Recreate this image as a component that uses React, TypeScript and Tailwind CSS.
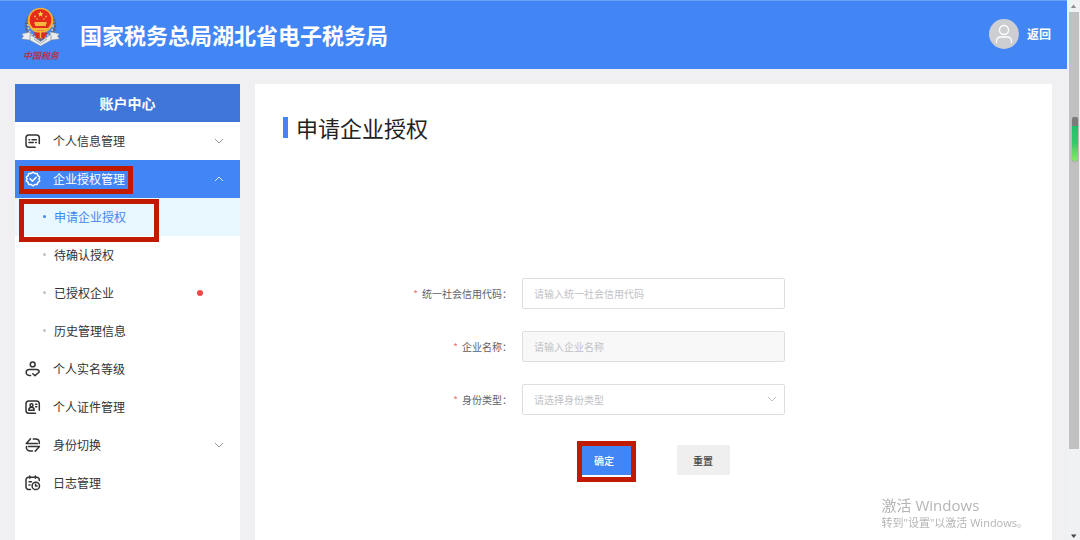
import React, { useState } from 'react';

interface SubItem {
  label: string;
  notice?: boolean;
}

interface MenuItem {
  label: string;
  icon: React.ReactNode;
  expandable?: boolean;
  children?: SubItem[];
}

const iconProps = {
  className: 'w-4 h-4 shrink-0',
  viewBox: '0 0 16 16',
  fill: 'none',
  stroke: 'currentColor',
  strokeWidth: 1.5,
  strokeLinecap: 'round' as const,
  strokeLinejoin: 'round' as const,
};

const InfoIcon = () => (
  <svg {...iconProps}>
    <path d="M10.2 14.3H3.8A2.8 2.8 0 0 1 1 11.5V4.8A2.8 2.8 0 0 1 3.8 2h7.7a2.8 2.8 0 0 1 2.8 2.8v5.7" />
    <path d="M4 6.7h.6M7 6.7h4.3M4 9.5h4.3M10.7 9.5h.6" />
  </svg>
);

const BadgeIcon = () => (
  <svg {...iconProps}>
    <path d="M8 1.2l1.9 1.3 2.3-.1.7 2.2 1.8 1.4L14 8l.7 2-1.8 1.4-.7 2.2-2.3-.1L8 14.8l-1.9-1.3-2.3.1-.7-2.2L1.3 10 2 8l-.7-2 1.8-1.4.7-2.2 2.3.1z" />
    <path d="M5 7.8l2.5 2.3L11.2 6.2" />
  </svg>
);

const RealNameIcon = () => (
  <svg {...iconProps}>
    <circle cx="7.7" cy="3.4" r="2.4" />
    <path d="M5.6 14.5H4.2c-1.8 0-3-1.4-3-3.1s1.2-3 3-3h7.2c1.6 0 2.8 1.100 2.8 2.600L10 14.600 7.800 12.700" />
  </svg>
);

const CardIcon = () => (
  <svg {...iconProps}>
    <path d="M10.5 14.3H3.8A2.8 2.8 0 0 1 1 11.5V4.8A2.8 2.8 0 0 1 3.800 2h7.700a2.800 2.800 0 0 1 2.800 2.800v6.400" />
    <circle cx="6.500" cy="6.200" r="1.500" />
    <path d="M3.800 11.200c0-1.900 1-2.900 2.700-2.900s2.700 1 2.700 2.900zM10.600 5.200h1.200M10.600 7.800h1.200" />
  </svg>
);

const SwitchIcon = () => (
  <svg {...iconProps}>
    <path d="M5.5 1.800L1.300 6.600h11M8.300 2h2.200c2.200 0 3.800 1.400 3.800 3.600v.8" />
    <path d="M10.200 14.200l4.200-4.800h-11M7.500 14H5.200C3 14 1.400 12.600 1.400 10.400v-.8" />
  </svg>
);

const LogIcon = () => (
  <svg {...iconProps}>
    <path d="M5.500 14.500H3.500A2.500 2.500 0 0 1 1 12V4.800a2.500 2.500 0 0 1 2.500-2.500h8.300a2.500 2.500 0 0 1 2.500 2.500v.7M4.800 1v2.300M10.400 1v2.300M4 6.700h2.500M4 10h1" />
    <circle cx="10.800" cy="10.900" r="3.700" />
    <path d="M10.600 9.200v1.900h1.500" />
  </svg>
);

const Chevron = ({ up = false }: { up?: boolean }) => (
  <svg className="w-[10px] h-[10px]" viewBox="0 0 10 10" fill="none" stroke="currentColor" strokeWidth="1">
    <path d={up ? 'M1 7l4-4 4 4' : 'M1 3l4 4 4-4'} />
  </svg>
);

const TaxLogo = () => (
  <svg className="w-10 h-10" viewBox="0 0 40 40">
    {/* gear wheel and wheat ears */}
    <circle cx="19.5" cy="18.5" r="14" fill="none" stroke="#5b6170" strokeWidth="3.5" strokeDasharray="2 1" />
    <circle cx="19.5" cy="18.5" r="12.5" fill="none" stroke="#d5d2c4" strokeWidth="1.5" strokeDasharray="2 1.5" />
    <circle cx="19.5" cy="13.5" r="12.8" fill="#f2b233" />
    <circle cx="19.5" cy="13" r="10.8" fill="#e32a1c" />
    <path d="M19.5 4l.9 2 2.1.2-1.6 1.400.5 2.100-1.800-1.100-1.800 1.100.5-2.100-1.600-1.400 2-.2z" fill="#f9cf4a" />
    <g fill="#f6b73c">
      <circle cx="14" cy="9.500" r=".9" />
      <circle cx="25" cy="9.500" r=".9" />
      <circle cx="16" cy="12" r=".8" />
      <circle cx="23" cy="12" r=".8" />
      <path d="M14 15h11l1.500 1.500H25V19H14v-2.500h-1.500z" />
      <path d="M11 21h17l-2.500 2.500h-12z" />
    </g>
    <path d="M12.500 25.500h14l-3 6h-8z" fill="#dc2c20" />
    <path d="M19.500 24v7" stroke="#f4be46" strokeWidth="1.500" />
    {/* ribbon */}
    <path d="M.5 27l8-2 1.500 3 9.500 6.500L29 28l1.500-3 8 2-2 2 2 3-8 1-11 6-11-6-8-1 2-3z" fill="#e9edf0" stroke="#7d8793" strokeWidth=".5" />
    <path d="M9 28v5M30 28v5M13 32l6.500 4.500L26 32" stroke="#8a949e" strokeWidth=".8" fill="none" />
  </svg>
);

const menu: MenuItem[] = [
  { label: '个人信息管理', icon: <InfoIcon />, expandable: true },
  {
    label: '企业授权管理',
    icon: <BadgeIcon />,
    expandable: true,
    children: [
      { label: '申请企业授权' },
      { label: '待确认授权' },
      { label: '已授权企业', notice: true },
      { label: '历史管理信息' },
    ],
  },
  { label: '个人实名等级', icon: <RealNameIcon /> },
  { label: '个人证件管理', icon: <CardIcon /> },
  { label: '身份切换', icon: <SwitchIcon />, expandable: true },
  { label: '日志管理', icon: <LogIcon /> },
];

const Header = () => (
  <header className="h-[69px] bg-[#4285f4] border-t border-[#6ba0f6] flex items-center justify-between pl-[21px] pr-4 pb-[2px] text-white">
    <div className="flex items-center gap-[19px]">
      <div className="flex flex-col items-center gap-1">
        <TaxLogo />
        <span className="text-[9px] leading-[10px] italic font-bold text-[#b3344e]">中国税务</span>
      </div>
      <h1 className="text-[22px] leading-8 font-bold">国家税务总局湖北省电子税务局</h1>
    </div>
    <div className="flex items-center gap-2">
      <span className="w-[30px] h-[30px] rounded-full bg-[#ccced2] flex items-center justify-center">
        <svg className="w-5 h-5" viewBox="0 0 20 20" fill="none" stroke="#fff" strokeWidth="1.3" strokeLinecap="round">
          <circle cx="10" cy="6" r="4.500" />
          <path d="M2.500 18.500V17a4 4 0 0 1 4-4h7a4 4 0 0 1 4 4v1.500" />
        </svg>
      </span>
      <a href="#" className="text-xs font-bold">返回</a>
    </div>
  </header>
);

const Sidebar = () => {
  const [open, setOpen] = useState('企业授权管理');
  const [current, setCurrent] = useState('申请企业授权');

  return (
    <nav className="w-[225px] shrink-0 bg-white text-xs text-[#333]">
      <h2 className="h-[38px] bg-[#4076d8] text-white text-sm font-bold flex items-center justify-center">账户中心</h2>
      <ul>
        {menu.map((item) => {
          const expanded = open === item.label;
          return (
            <li key={item.label}>
              <button
                type="button"
                onClick={() => setOpen(expanded ? '' : item.label)}
                className={`relative w-full h-[38px] pl-[10px] pr-4 pb-px flex items-center gap-3 ${
                  expanded ? 'bg-[#4285f4] text-white' : 'text-[#333]'
                }`}
              >
                {item.icon}
                <span className="flex-1 text-left">{item.label}</span>
                {item.expandable && (
                  <span className={expanded ? 'text-[#dbe8fd]' : 'text-[#999]'}>
                    <Chevron up={expanded} />
                  </span>
                )}
                {expanded && item.children && (
                  <span className="absolute left-1 top-[6px] w-[114px] h-[28px] border-5 border-[#c01a00]" />
                )}
              </button>
              {expanded && item.children && (
                <ul>
                  {item.children.map((sub) => {
                    const active = current === sub.label;
                    return (
                      <li key={sub.label}>
                        <a
                          href="#"
                          onClick={() => setCurrent(sub.label)}
                          className={`relative h-[38px] pl-7 pr-[37px] pb-px flex items-center gap-2 ${
                            active ? 'bg-[#e9f7fe] text-[#4285f4]' : ''
                          }`}
                        >
                          <span className={`w-[3px] h-[3px] rounded-full ${active ? 'bg-[#4285f4]' : 'bg-[#c4c4c4]'}`} />
                          <span className="flex-1">{sub.label}</span>
                          {sub.notice && <span className="w-[6px] h-[6px] rounded-full bg-[#f04848]" />}
                          {active && (
                            <span className="absolute left-1 top-px w-[140px] h-[43px] z-10 border-5 border-[#c01a00]" />
                          )}
                        </a>
                      </li>
                    );
                  })}
                </ul>
              )}
            </li>
          );
        })}
      </ul>
    </nav>
  );
};

const fieldClass =
  'w-full h-[31px] px-[11px] border border-[#dcdee2] rounded-xs text-[10px] placeholder:text-[#c0c2c6] outline-none';

const Label = ({ htmlFor, children }: { htmlFor: string; children: React.ReactNode }) => (
  <label htmlFor={htmlFor} className="text-right text-[10px] text-[#606266]">
    <span className="text-[#f56c6c] mr-1">*</span>
    {children}：
  </label>
);

const AuthForm = () => {
  const [code, setCode] = useState('');
  const [role, setRole] = useState('');

  const reset = () => {
    setCode('');
    setRole('');
  };

  return (
    <form onSubmit={(e) => e.preventDefault()} className="mt-[134px]">
      <div className="grid grid-cols-[1fr_263px_1fr] gap-x-[10px] gap-y-[22px] items-center">
        <Label htmlFor="code">统一社会信用代码</Label>
        <input
          id="code"
          type="text"
          value={code}
          onChange={(e) => setCode(e.target.value)}
          placeholder="请输入统一社会信用代码"
          className={`${fieldClass} bg-white`}
        />
        <span />

        <Label htmlFor="company">企业名称</Label>
        <input id="company" type="text" disabled placeholder="请输入企业名称" className={`${fieldClass} bg-[#f8f8f8]`} />
        <span />

        <Label htmlFor="role">身份类型</Label>
        <div className="relative">
          <select
            id="role"
            value={role}
            onChange={(e) => setRole(e.target.value)}
            className={`${fieldClass} appearance-none bg-white text-[#c0c2c6]`}
          >
            <option value="">请选择身份类型</option>
          </select>
          <span className="absolute right-2 top-[10px] text-[#c0c2c6] pointer-events-none">
            <Chevron />
          </span>
        </div>
        <span />
      </div>

      <div className="mt-[30px] flex justify-center gap-[46px] text-[10px] font-medium">
        <div className="relative">
          <button type="submit" className="w-[53px] h-[30px] bg-[#4285f4] text-white">确定</button>
          <span className="absolute -left-px -top-1 w-[59px] h-[41px] border-5 border-[#c01a00] pointer-events-none" />
        </div>
        <button type="button" onClick={reset} className="w-[53px] h-[30px] bg-[#efefef] text-[#444]">重置</button>
      </div>
    </form>
  );
};

const Scrollbar = () => (
  <div className="relative w-[13px] shrink-0 bg-[#f0f1f3] flex flex-col items-center">
    <svg className="w-[11px] h-3" viewBox="0 0 11 12">
      <path d="M3 8l2.500-3.500L8 8z" fill="#8a8a8a" />
    </svg>
    <div className="w-[10px] h-[437px] bg-[#c1c1c1]" />
    <svg className="w-[11px] h-3 mt-auto" viewBox="0 0 11 12">
      <path d="M3 6.500h5.500L5.700 10z" fill="#444" />
    </svg>
    <div className="absolute right-[2px] top-[117px] w-[6px] h-11 rounded-xs overflow-hidden bg-[#7b7b7b] shadow">
      <div className="mt-[9px] h-[35px] bg-linear-to-b from-[#22c06c] via-[#2fcb68] to-[#8be56c]" />
    </div>
  </div>
);

export default function App() {
  return (
    <div className="flex min-h-screen bg-[#f0f0f3] font-['Noto_Sans_CJK_SC',sans-serif]">
      <div className="flex-1 min-w-0 flex flex-col">
        <Header />
        <div className="flex-1 flex gap-[15px] pt-[15px] px-[15px]">
          <Sidebar />
          <main className="flex-1 min-w-0 bg-white pt-[27px]">
            <div className="pl-7 flex items-center gap-2">
              <span className="w-[5px] h-[21px] bg-[#4285f4]" />
              <h2 className="text-[22px] leading-[33px] text-[#222]">申请企业授权</h2>
            </div>
            <AuthForm />
          </main>
        </div>
      </div>
      <Scrollbar />
      <div className="fixed right-[52px] bottom-[9px] font-['Open_Sans','Noto_Sans_CJK_SC',sans-serif] text-[#b5b5b5] pointer-events-none">
        <p className="text-[15px] leading-5">激活 Windows</p>
        <p className="text-[11px] leading-4">转到"设置"以激活 Windows。</p>
      </div>
    </div>
  );
}
